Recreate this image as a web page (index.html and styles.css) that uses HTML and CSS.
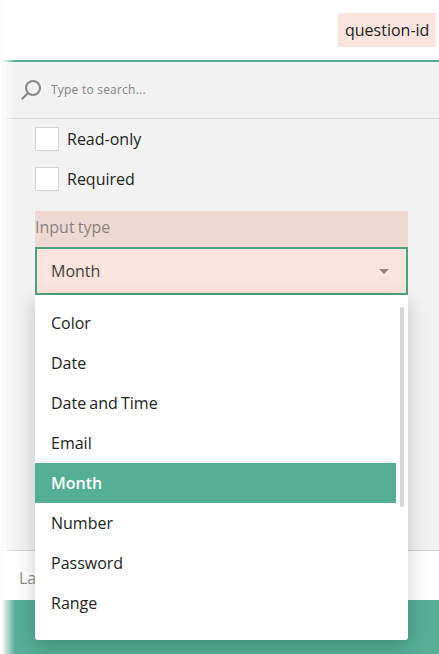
FILE: index.html
```html
<!DOCTYPE html>
<html lang="en">
<head>
<meta charset="utf-8">
<title>Property panel</title>
<link rel="stylesheet" href="styles.css">
</head>
<body>
<div class="panel">
  <header class="header"><span class="object-id">question-id</span></header>
  <div class="search">
    <svg class="search-icon" width="20" height="20" viewBox="0 0 20 20"><circle cx="12" cy="8" r="7" /><path d="M7 13L.8 19.2" /></svg>
    <span>Type to search...</span>
  </div>
  <main class="content">
    <div class="check"><span class="box"></span><span>Read-only</span></div>
    <div class="check"><span class="box"></span><span>Required</span></div>
    <div class="field">
      <div class="label">Input type</div>
      <div class="select">
        <span>Month</span>
        <svg width="10" height="5" viewBox="0 0 10 5"><path d="M0 0H10L5 5Z" /></svg>
      </div>
      <div class="dropdown">
        <div class="option">Color</div>
        <div class="option">Date</div>
        <div class="option">Date and Time</div>
        <div class="option">Email</div>
        <div class="option selected">Month</div>
        <div class="option">Number</div>
        <div class="option">Password</div>
        <div class="option">Range</div>
        <div class="scrollbar"></div>
      </div>
    </div>
  </main>
  <div class="category">La</div>
  <div class="footer"></div>
  <div class="edge-fade"></div>
</div>
</body>
</html>
```
FILE: styles.css
```css
* { box-sizing: border-box; }
body {
  margin: 0;
  font-family: "Open Sans", sans-serif;
  font-size: 16px;
  line-height: 24px;
  word-spacing: -1px;
  color: #222;
  overflow: hidden;
}
.panel {
  position: relative;
  display: flex;
  flex-direction: column;
  height: 654px;
  background: #f2f2f2;
}
.header {
  display: flex;
  justify-content: flex-end;
  height: 62px;
  padding: 13px 3px 0 0;
  background: #fff;
  border-bottom: 2px solid #54af95;
}
.object-id {
  width: 98px;
  height: 34px;
  padding: 5px 0 0 7px;
  background: #fbe4dd;
  white-space: nowrap;
}
.search {
  display: flex;
  align-items: center;
  gap: 10px;
  height: 57px;
  padding-left: 21px;
  border-bottom: 1px solid #d4d4d4;
  color: #858585;
  font-size: 12px;
  letter-spacing: .22px;
  word-spacing: 0;
}
.search-icon {
  fill: none;
  stroke: #858585;
  stroke-width: 2;
}
.content {
  height: 431px;
  padding: 8px 31px 0 35px;
}
.check {
  display: flex;
  gap: 8px;
  height: 24px;
  margin-bottom: 16px;
}
.box {
  width: 24px;
  height: 24px;
  background: #fff;
  border: 1px solid #d4d4d4;
}
.field {
  position: relative;
  margin-top: 20px;
}
.label {
  height: 36px;
  padding-top: 4px;
  background: #efdad3;
  color: #8d8380;
}
.select {
  display: flex;
  align-items: center;
  justify-content: space-between;
  height: 48px;
  padding: 0 17px 0 14px;
  background: #fbe4dd;
  border: 2px solid #4da183;
  color: #443d3c;
}
.select path { fill: #948380; }
.dropdown {
  position: absolute;
  top: 84px;
  left: 0;
  width: 100%;
  height: 345px;
  padding: 8px 12px 0 0;
  background: #fff;
  border-radius: 3px;
  box-shadow: 0 6px 20px rgba(0, 0, 0, .2);
}
.option {
  height: 40px;
  padding: 8px 16px;
}
.selected {
  background: #54af95;
  color: #fff;
  font-weight: 600;
}
.scrollbar {
  position: absolute;
  top: 12px;
  right: 4px;
  width: 4px;
  height: 200px;
  background: #d4d4d4;
  border-radius: 2px;
}
.category {
  height: 50px;
  padding: 15px 0 0 19px;
  background: #fff;
  border-top: 1px solid #d4d4d4;
  color: #909090;
}
.footer {
  height: 54px;
  background: #54af95;
}
.edge-fade {
  position: absolute;
  top: 0;
  left: 0;
  width: 15px;
  height: 100%;
  background: linear-gradient(to right, #fff 2px, #f9f9f9 2px, #f9f9f9 3px, rgba(255, 255, 255, .9) 3px, rgba(255, 255, 255, 0));
}
```
